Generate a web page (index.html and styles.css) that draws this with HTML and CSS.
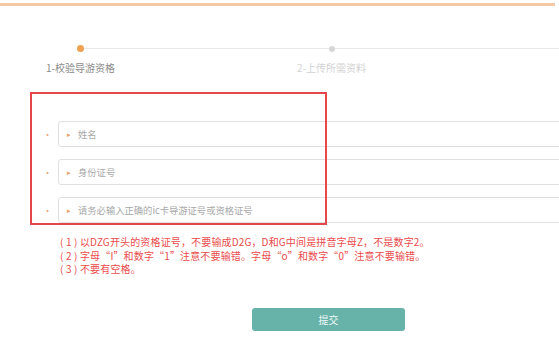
FILE: index.html
```html
<!DOCTYPE html>
<html lang="zh-CN">
<head>
<meta charset="utf-8">
<title>校验导游资格</title>
<link rel="stylesheet" href="styles.css">
</head>
<body>
<div class="topbar"></div>
<div class="steps-head">
  <span class="dot dot-active"></span>
  <span class="track track-mid"></span>
  <span class="dot dot-idle"></span>
  <span class="track track-rest"></span>
</div>
<div class="steps-labels">
  <span class="step-label step-active">1-校验导游资格</span>
  <span class="step-label step-idle">2-上传所需资料</span>
</div>
<form class="form">
  <div class="row"><span class="req">•</span><div class="field"><span class="arrow">▸</span><span class="ph">姓名</span></div></div>
  <div class="row"><span class="req">•</span><div class="field"><span class="arrow">▸</span><span class="ph">身份证号</span></div></div>
  <div class="row"><span class="req">•</span><div class="field"><span class="arrow">▸</span><span class="ph">请务必输入正确的ic卡导游证号或资格证号</span></div></div>
</form>
<div class="notes">
  <p>( 1 ) 以DZG开头的资格证号，不要输成D2G，D和G中间是拼音字母Z，不是数字2。</p>
  <p>( 2 ) 字母“I”和数字“1”注意不要输错。字母“o”和数字“0”注意不要输错。</p>
  <p>( 3 ) 不要有空格。</p>
</div>
<div class="actions"><button class="submit" type="button">提交</button></div>
<div class="highlight"></div>
</body>
</html>
```

FILE: styles.css
```css
html, body {
  margin: 0;
  padding: 0;
  background: #ffffff;
  overflow: hidden;
  width: 559px;
  height: 339px;
  font-family: "Noto Sans CJK SC", "Noto Sans", sans-serif;
}
.topbar {
  margin: 3px 4px 0 0;
  height: 3px;
  background: #f3c8a2;
}
.steps-head {
  display: flex;
  align-items: center;
  margin-top: 39px;
  padding-left: 77px;
  height: 7px;
}
.dot {
  display: block;
  border-radius: 50%;
  flex: none;
}
.dot-active {
  width: 7px;
  height: 7px;
  background: #efa152;
}
.dot-idle {
  width: 6px;
  height: 6px;
  background: #d6d6d6;
}
.track {
  display: block;
  height: 1px;
  background: #e8e8e8;
}
.track-mid {
  width: 245px;
}
.track-rest {
  flex: 1;
}
.steps-labels {
  display: flex;
  margin-top: 9px;
  padding-left: 30px;
  gap: 150px;
}
.step-label {
  display: block;
  width: 101px;
  text-align: center;
  font-size: 10px;
  line-height: 14px;
}
.step-active { color: #8a8a8a; }
.step-idle { color: #d2d2d2; }
.form {
  margin: 46px 0 0 0;
  display: flex;
  flex-direction: column;
  gap: 12px;
}
.row {
  display: flex;
  align-items: center;
  height: 26px;
}
.req {
  width: 58px;
  padding-left: 43px;
  box-sizing: border-box;
  color: #e9a27c;
  font-size: 9px;
  flex: none;
}
.field {
  flex: none;
  width: 520px;
  height: 26px;
  box-sizing: border-box;
  border: 1px solid #e0e0e0;
  border-radius: 3px;
  display: flex;
  align-items: center;
  padding-left: 8px;
}
.arrow {
  color: #e9a066;
  font-size: 7px;
  width: 11px;
}
.ph {
  color: #a8a8a8;
  font-size: 9.3px;
}
.notes {
  margin-top: 12px;
  padding-left: 60px;
  color: #ea4b4b;
  font-size: 10px;
  letter-spacing: 0.15px;
  line-height: 13.5px;
}
.notes p { margin: 0; white-space: nowrap; }
.actions {
  margin-top: 29px;
  padding-left: 252px;
}
.submit {
  width: 153px;
  height: 23px;
  border: none;
  border-radius: 3px;
  background: #67b3a9;
  color: #eef8f6;
  font-family: inherit;
  font-size: 10px;
  padding: 0;
}
.highlight {
  position: absolute;
  left: 30px;
  top: 92px;
  width: 293px;
  height: 129px;
  border: 2px solid #e5464c;
}
```
